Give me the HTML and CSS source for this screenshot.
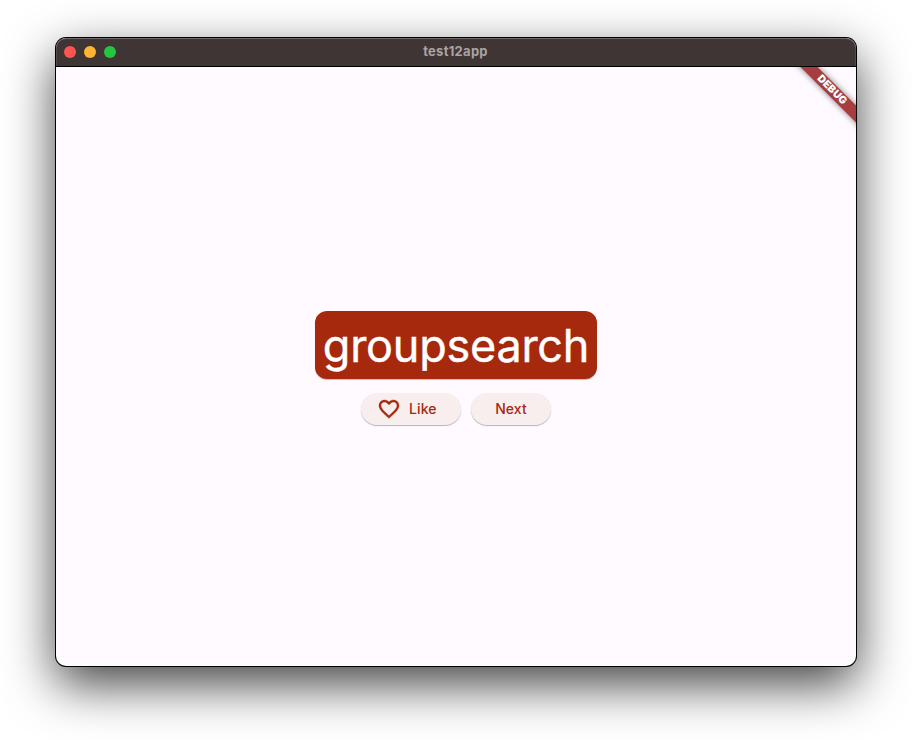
FILE: index.html
```html
<!DOCTYPE html>
<html lang="en">
<head>
<meta charset="utf-8">
<title>test12app</title>
<link rel="stylesheet" href="styles.css">
</head>
<body>
<div class="window">
  <header class="titlebar">
    <div class="controls"><span class="dot close"></span><span class="dot minimize"></span><span class="dot maximize"></span></div>
    <h1 class="title">test12app</h1>
  </header>
  <main class="content">
    <div class="card">groupsearch</div>
    <div class="actions">
      <button class="button with-icon">
        <svg class="heart" viewBox="0 0 24 24"><path d="M16.5 3c-1.74 0-3.41.81-4.5 2.09C10.91 3.81 9.24 3 7.5 3 4.42 3 2 5.42 2 8.5c0 3.78 3.4 6.86 8.55 11.54L12 21.35l1.45-1.32C18.6 15.36 22 12.28 22 8.5 22 5.42 19.58 3 16.5 3zm-4.4 15.55l-.1.1-.1-.1C7.14 14.24 4 11.39 4 8.5 4 6.5 5.5 5 7.5 5c1.54 0 3.04.99 3.57 2.36h1.87C13.46 5.99 14.96 5 16.5 5c2 0 3.5 1.5 3.5 3.5 0 2.89-3.14 5.74-7.9 10.05z"/></svg>
        <span>Like</span>
      </button>
      <button class="button">Next</button>
    </div>
    <div class="banner">DEBUG</div>
  </main>
</div>
</body>
</html>
```
FILE: styles.css
```css
* { box-sizing: border-box; }
body {
  margin: 0;
  padding: 38px 56px 74px;
  height: 740px;
  overflow: hidden;
  background: #fff;
  font-family: Inter, "Liberation Sans", sans-serif;
}
.window {
  height: 628px;
  display: flex;
  flex-direction: column;
  border-radius: 10px;
  background: #fefaff;
  box-shadow: 0 0 0 1px #000, 0 18px 50px rgba(0, 0, 0, .75);
}
.titlebar {
  height: 29px;
  flex: none;
  display: grid;
  grid-template-columns: 1fr auto 1fr;
  align-items: center;
  padding: 0 8px;
  border-radius: 10px 10px 0 0;
  border-bottom: 1px solid #000;
  background: #3f3534;
  box-shadow: inset 0 1px 0 #736b6a, inset 1px 0 0 #554c4b, inset -1px 0 0 #554c4b;
}
.controls { display: flex; gap: 8px; }
.dot { width: 12px; height: 12px; border-radius: 50%; }
.close { background: #ff5450; }
.minimize { background: #ffb534; }
.maximize { background: #22c63f; }
.title {
  margin: 0 1px 2px 0;
  font-size: 13px;
  line-height: 16px;
  font-weight: 700;
  letter-spacing: .28px;
  color: #aba3a2;
}
.content {
  position: relative;
  flex: 1;
  display: flex;
  flex-direction: column;
  align-items: center;
  padding-top: 244px;
  gap: 14px;
  overflow: hidden;
  border-radius: 0 0 10px 10px;
}
.card {
  width: 282px;
  height: 68px;
  display: flex;
  justify-content: center;
  padding-top: 8px;
  border-radius: 12px;
  background: #a6290e;
  color: #fff;
  font-size: 45px;
  line-height: 54px;
  letter-spacing: -.25px;
  -webkit-text-stroke: .4px #fff;
  box-shadow: 0 1px 1px rgba(0, 0, 0, .25);
}
.actions { display: flex; gap: 10px; }
.button {
  height: 32px;
  width: 80px;
  display: flex;
  align-items: center;
  justify-content: center;
  border: 0;
  padding: 0;
  border-radius: 16px;
  background: #f9eeee;
  color: #a6290e;
  font: 540 14px/20px Inter, "Liberation Sans", sans-serif;
  letter-spacing: .1px;
  box-shadow: 0 1px 1px rgba(0, 0, 0, .28);
}
.with-icon {
  width: 100px;
  justify-content: flex-start;
  padding-left: 16px;
  gap: 8px;
}
.heart { width: 24px; height: 24px; fill: currentColor; stroke: currentColor; stroke-width: .4; }
.banner {
  position: absolute;
  top: 17px;
  right: -36px;
  width: 120px;
  height: 12px;
  transform: rotate(45deg);
  background: #a63d40;
  color: #fff;
  font-size: 10.4px;
  line-height: 12px;
  font-weight: 900;
  letter-spacing: .2px;
  text-align: center;
  box-shadow: 0 0 6px rgba(0, 0, 0, .5);
}
```
